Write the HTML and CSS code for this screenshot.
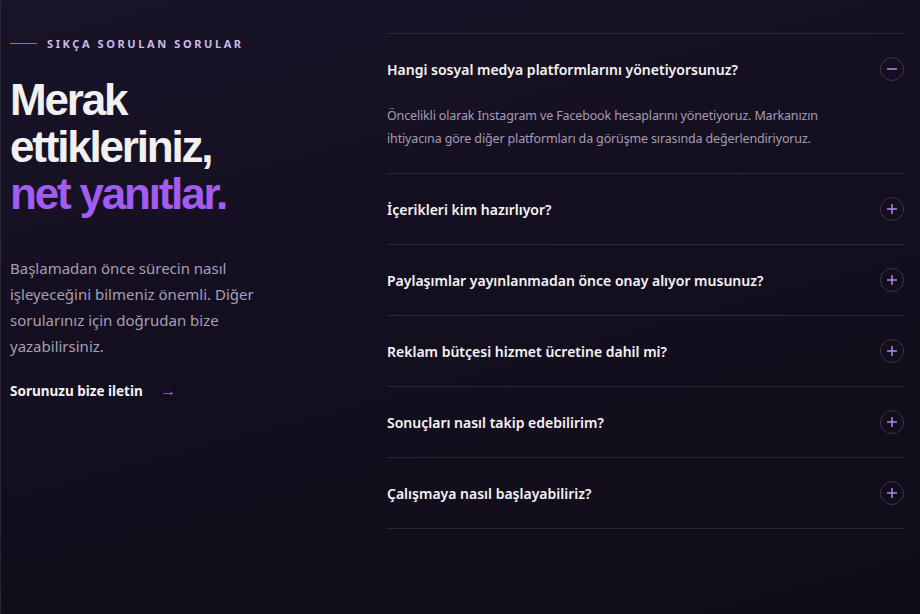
FILE: index.html
```html
<!DOCTYPE html>
<html lang="tr">
    <head>
        <meta charset="utf-8" />
        <title>Sıkça Sorulan Sorular</title>
        <meta name="viewport" content="width=device-width, initial-scale=1.0" />
        <link rel="stylesheet" href="styles.css">
    </head>
    <body>
        <section class="faq">
            <div class="intro">
                <div class="eyebrow">
                    <span class="eyebrowLine"></span>
                    <span>SIKÇA SORULAN SORULAR</span>
                </div>
                <h2 class="title">
                    Merak<br />ettikleriniz,<br /><span class="accent">net yanıtlar.</span>
                </h2>
                <p class="lead">
                    Başlamadan önce sürecin nasıl işleyeceğini bilmeniz önemli.
                    Diğer sorularınız için doğrudan bize yazabilirsiniz.
                </p>
                <a class="contactLink" href="#">
                    Sorunuzu bize iletin <span class="arrow">→</span>
                </a>
            </div>

            <div class="accordion">
                <div class="item open">
                    <button class="question">
                        <span>Hangi sosyal medya platformlarını yönetiyorsunuz?</span>
                        <span class="toggle">
                            <svg viewBox="0 0 24 24" width="24" height="24">
                                <circle cx="12" cy="12" r="11.5" />
                                <line x1="7" y1="12" x2="17" y2="12" />
                            </svg>
                        </span>
                    </button>
                    <div class="answer">
                        Öncelikli olarak Instagram ve Facebook hesaplarını yönetiyoruz. Markanızın
                        ihtiyacına göre diğer platformları da görüşme sırasında değerlendiriyoruz.
                    </div>
                </div>
                <div class="item">
                    <button class="question">
                        <span>İçerikleri kim hazırlıyor?</span>
                        <span class="toggle">
                            <svg viewBox="0 0 24 24" width="24" height="24">
                                <circle cx="12" cy="12" r="11.5" />
                                <line x1="7" y1="12" x2="17" y2="12" />
                                <line x1="12" y1="7" x2="12" y2="17" />
                            </svg>
                        </span>
                    </button>
                </div>
                <div class="item">
                    <button class="question">
                        <span>Paylaşımlar yayınlanmadan önce onay alıyor musunuz?</span>
                        <span class="toggle">
                            <svg viewBox="0 0 24 24" width="24" height="24">
                                <circle cx="12" cy="12" r="11.5" />
                                <line x1="7" y1="12" x2="17" y2="12" />
                                <line x1="12" y1="7" x2="12" y2="17" />
                            </svg>
                        </span>
                    </button>
                </div>
                <div class="item">
                    <button class="question">
                        <span>Reklam bütçesi hizmet ücretine dahil mi?</span>
                        <span class="toggle">
                            <svg viewBox="0 0 24 24" width="24" height="24">
                                <circle cx="12" cy="12" r="11.5" />
                                <line x1="7" y1="12" x2="17" y2="12" />
                                <line x1="12" y1="7" x2="12" y2="17" />
                            </svg>
                        </span>
                    </button>
                </div>
                <div class="item">
                    <button class="question">
                        <span>Sonuçları nasıl takip edebilirim?</span>
                        <span class="toggle">
                            <svg viewBox="0 0 24 24" width="24" height="24">
                                <circle cx="12" cy="12" r="11.5" />
                                <line x1="7" y1="12" x2="17" y2="12" />
                                <line x1="12" y1="7" x2="12" y2="17" />
                            </svg>
                        </span>
                    </button>
                </div>
                <div class="item">
                    <button class="question">
                        <span>Çalışmaya nasıl başlayabiliriz?</span>
                        <span class="toggle">
                            <svg viewBox="0 0 24 24" width="24" height="24">
                                <circle cx="12" cy="12" r="11.5" />
                                <line x1="7" y1="12" x2="17" y2="12" />
                                <line x1="12" y1="7" x2="12" y2="17" />
                            </svg>
                        </span>
                    </button>
                </div>
            </div>
        </section>
    </body>
</html>
```

FILE: styles.css
```css
html,
body {
    height: 100%;
}

body {
    margin: 0;
    background: linear-gradient(165deg, #191328 0%, #140f1f 45%, #100d18 100%);
    box-shadow: inset 1px 0 0 #2a2634;
    font-family: 'Noto Sans', 'Open Sans', sans-serif;
    color: #a69db3;
}

.faq {
    display: grid;
    grid-template-columns: 377px 1fr;
    padding: 33px 16px 0 10px;
}

.eyebrow {
    display: flex;
    align-items: center;
    gap: 10px;
    height: 20px;
    font-size: 11px;
    font-weight: 700;
    letter-spacing: 2.6px;
    color: #cbbce8;
}

.eyebrowLine {
    width: 27px;
    height: 1px;
    background: #a35cf2;
}

.title {
    margin: 23px 0 0;
    font-family: 'Liberation Sans', Arial, sans-serif;
    font-size: 44px;
    font-weight: 700;
    line-height: 47px;
    letter-spacing: -2.2px;
    color: #f1f0f3;
}

.accent {
    color: #a35cf2;
}

.lead {
    margin: 38px 0 0;
    max-width: 262px;
    font-size: 15px;
    line-height: 26px;
    color: #a79fb4;
}

.contactLink {
    display: inline-block;
    margin-top: 21px;
    font-size: 13.5px;
    font-weight: 700;
    line-height: 20px;
    color: #f3f1f6;
    text-decoration: none;
}

.arrow {
    margin-left: 14px;
    font-size: 16px;
    color: #a35cf2;
}

.accordion {
    border-top: 1px solid #2c2736;
}

.item {
    border-bottom: 1px solid #2c2736;
}

.question {
    display: flex;
    width: 100%;
    align-items: center;
    justify-content: space-between;
    padding: 23px 0;
    border: 0;
    background: none;
    font-family: inherit;
    font-size: 14px;
    font-weight: 600;
    color: #f6f4f8;
    text-align: left;
    cursor: pointer;
}

.toggle {
    display: flex;
    width: 24px;
    height: 24px;
}

.toggle circle {
    fill: none;
    stroke: #3b3545;
    stroke-width: 1;
}

.toggle line {
    stroke: #b385f2;
    stroke-width: 1.5;
}

.answer {
    max-width: 470px;
    padding-bottom: 23px;
    font-size: 12.5px;
    line-height: 23px;
    letter-spacing: -0.15px;
    color: #a69db3;
}
```
